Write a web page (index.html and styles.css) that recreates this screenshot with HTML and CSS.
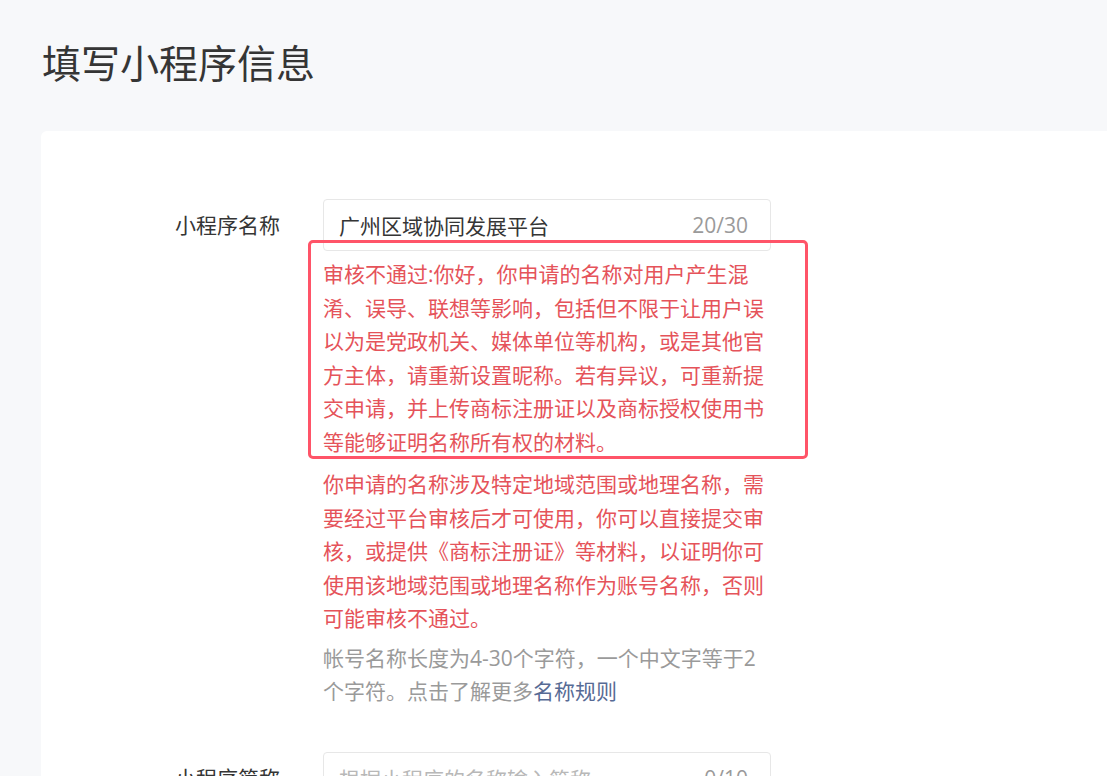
FILE: index.html
```html
<!DOCTYPE html>
<html lang="zh-CN">
<head>
<meta charset="utf-8">
<title>填写小程序信息</title>
<link rel="stylesheet" href="styles.css">
</head>
<body>
<div class="page">
  <h1 class="title">填写小程序信息</h1>
  <div class="card">
    <div class="row">
      <div class="label">小程序名称</div>
      <div class="field">
        <div class="input">
          <span class="value">广州区域协同发展平台</span>
          <span class="count">20/30</span>
        </div>
        <p class="msg msg-error msg-first">审核不通过:你好，你申请的名称对用户产生混淆、误导、联想等影响，包括但不限于让用户误以为是党政机关、媒体单位等机构，或是其他官方主体，请重新设置昵称。若有异议，可重新提交申请，并上传商标注册证以及商标授权使用书等能够证明名称所有权的材料。<span class="highlight"></span></p>
        <p class="msg msg-error">你申请的名称涉及特定地域范围或地理名称，需要经过平台审核后才可使用，你可以直接提交审核，或提供《商标注册证》等材料，以证明你可使用该地域范围或地理名称作为账号名称，否则可能审核不通过。</p>
        <p class="msg msg-tip">帐号名称长度为4-30个字符，一个中文字等于2个字符。点击了解更多<a class="link" href="#">名称规则</a></p>
      </div>
    </div>
    <div class="row row-next">
      <div class="label">小程序简称</div>
      <div class="field">
        <div class="input">
          <span class="placeholder">根据小程序的名称输入简称</span>
          <span class="count">0/10</span>
        </div>
      </div>
    </div>
  </div>
</div>
</body>
</html>
```

FILE: styles.css
```css
html, body {
  margin: 0;
  padding: 0;
}

body {
  background: #f7f8fa;
  font-family: "Open Sans", "Noto Sans CJK SC", sans-serif;
  color: #353535;
  overflow: hidden;
  height: 776px;
}

.page {
  padding-left: 41px;
}

.title {
  margin: 43px 0 49px 1px;
  font-size: 39px;
  line-height: 39px;
  font-weight: 400;
  color: #353535;
}

.card {
  background: #fff;
  border-radius: 6px;
  margin-right: -20px;
  padding: 68px 0 40px 134px;
  min-height: 700px;
}

.row {
  display: flex;
  align-items: flex-start;
}

.row-next {
  margin-top: 43px;
}

.label {
  width: 148px;
  flex: none;
  font-size: 21px;
  line-height: 52px;
  color: #353535;
}

.field {
  width: 448px;
  flex: none;
}

.input {
  box-sizing: border-box;
  height: 52px;
  border: 1px solid #e7e7e7;
  border-radius: 4px;
  padding: 0 22px 0 15px;
  display: flex;
  align-items: center;
  justify-content: space-between;
  font-size: 21px;
}

.value {
  color: #353535;
}

.placeholder {
  color: #b8b8b8;
}

.count {
  color: #9a9a9a;
}

.msg {
  margin: 0;
  font-size: 21px;
  line-height: 33.5px;
  width: 444px;
}

.msg-error {
  color: #e5535a;
  margin-top: 9px;
}

.msg-first {
  margin-top: 7px;
  position: relative;
}

.msg-tip {
  color: #9a9a9a;
  margin-top: 6px;
}

.link {
  color: #576b95;
  text-decoration: none;
}

.highlight {
  position: absolute;
  top: -18px;
  left: -15px;
  right: -41px;
  bottom: 0;
  border: 3px solid #ff5468;
  border-radius: 5px;
  pointer-events: none;
}
```
